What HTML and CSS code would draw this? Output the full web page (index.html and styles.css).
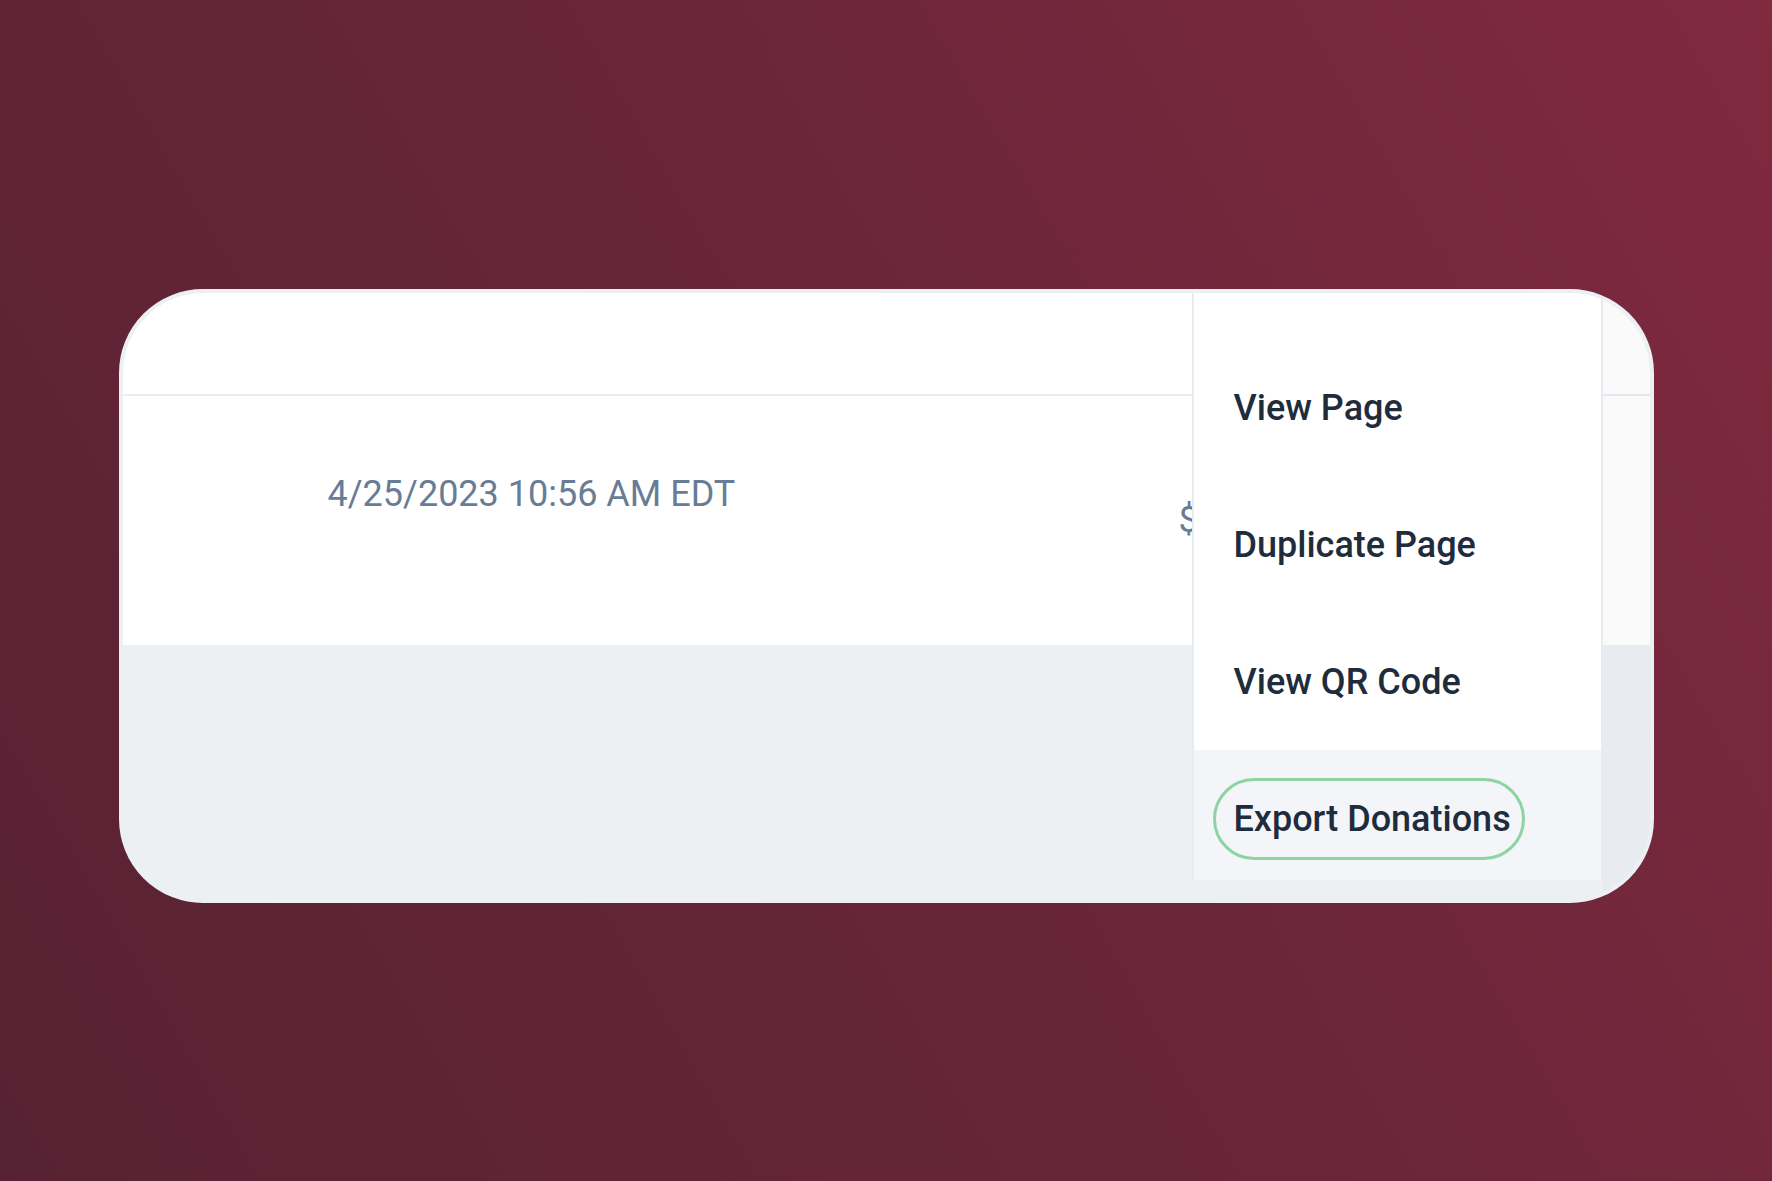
FILE: index.html
```html
<!DOCTYPE html>
<html lang="en">

<head>
  <meta charset="UTF-8">
  <meta name="viewport" content="width=device-width, initial-scale=1.0">
  <title>Export Donations</title>
  <link rel="stylesheet" href="styles.css">
</head>

<body>
  <main class="card">
    <div class="table-head"></div>

    <div class="table-row">
      <div class="cell-date">4/25/2023 10:56 AM EDT</div>
      <div class="cell-amount">$</div>
    </div>

    <div class="table-foot"></div>

    <!-- faixa de sombra à direita do menu -->
    <div class="menu-shade"></div>

    <!-- Menu de ações -->
    <div class="menu">
      <a class="menu-item" href="#">View Page</a>
      <a class="menu-item" href="#">Duplicate Page</a>
      <a class="menu-item" href="#">View QR Code</a>
      <a class="menu-item menu-item-active" href="#"><span class="pill">Export Donations</span></a>
    </div>
  </main>
</body>

</html>
```

FILE: styles.css
```css
* {
  box-sizing: border-box;
}

body {
  margin: 0;
  height: 100vh;
  display: flex;
  justify-content: center;
  align-items: flex-start;
  background: linear-gradient(60deg, #572233 0%, #6a2639 55%, #80293f 100%);
  font-family: Roboto, 'Liberation Sans', Arial, sans-serif;
}

.card {
  position: relative;
  margin-top: 289px;
  width: 1535px;
  height: 614px;
  display: flex;
  flex-direction: column;
  border: 4px solid #eceff4;
  border-radius: 84px;
  background-color: #edf0f3;
  overflow: hidden;
}

.table-head {
  height: 103px;
  background-color: #ffffff;
  border-bottom: 2px solid #e8ecf3;
}

.table-row {
  height: 249px;
  display: flex;
  background-color: #ffffff;
  color: #687c96;
  font-size: 36px;
  line-height: 40px;
}

.cell-date {
  width: 1056px;
  padding: 78px 0 0 205px;
}

.cell-amount {
  width: 13px;
  padding-top: 104px;
  overflow: hidden;
  white-space: nowrap;
}

.table-foot {
  flex: 1;
  background-color: #edf0f3;
}

.menu-shade {
  position: absolute;
  top: 0;
  bottom: 0;
  left: 1480px;
  right: 0;
  background-color: rgba(40, 60, 90, 0.025);
}

/* MENU */
.menu {
  position: absolute;
  top: 0;
  left: 1069px;
  bottom: 19px;
  width: 411px;
  display: flex;
  flex-direction: column;
  padding-top: 46px;
  background-color: #ffffff;
  border-left: 2px solid #e7ebf2;
  border-right: 2px solid #e7ebf2;
}

.menu-item {
  height: 137px;
  display: flex;
  align-items: center;
  padding-left: 40px;
  color: #1f2c3c;
  font-size: 36px;
  font-weight: 500;
  line-height: 40px;
  text-decoration: none;
}

.menu-item-active {
  flex: 1;
  height: auto;
  padding-top: 8px;
  background-color: #f3f5f8;
}

.pill {
  margin-left: -21px;
  padding: 18px 11px 18px 18px;
  border: 3px solid #8dd3a4;
  border-radius: 50px;
}
```
